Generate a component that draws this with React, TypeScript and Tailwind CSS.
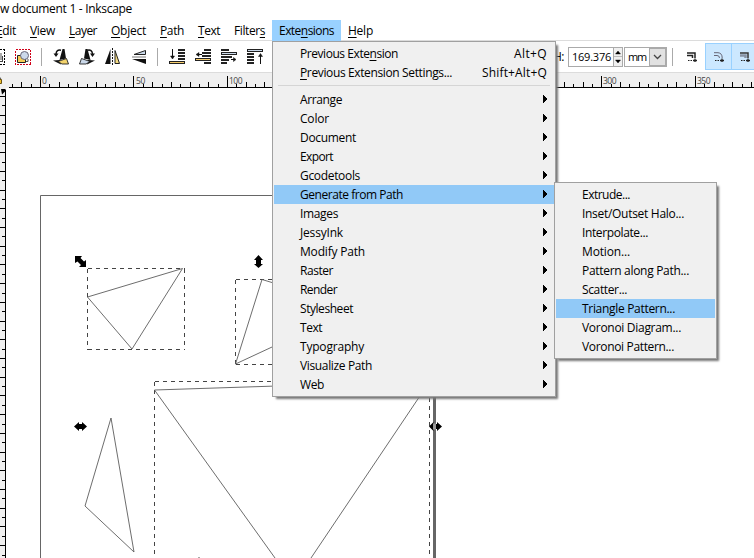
import React from "react";

type Mark = [string, string, string];

const menus: { t: Mark; x: string }[] = [
  { t: ["", "E", "dit"], x: "w-[34px]" },
  { t: ["", "V", "iew"], x: "w-[39px]" },
  { t: ["", "L", "ayer"], x: "w-[42px]" },
  { t: ["", "O", "bject"], x: "w-[49px]" },
  { t: ["", "P", "ath"], x: "w-[38px]" },
  { t: ["", "T", "ext"], x: "w-[36px]" },
  { t: ["Filter", "s", ""], x: "w-[38px]" },
];

const extensions: [string, number][] = [
  ["Arrange", 42], ["Color", 29], ["Document", 56], ["Export", 33], ["Gcodetools", 60],
  ["Generate from Path", 103], ["Images", 38], ["JessyInk", 43], ["Modify Path", 65],
  ["Raster", 33], ["Render", 37], ["Stylesheet", 53], ["Text", 22], ["Typography", 64],
  ["Visualize Path", 72], ["Web", 24],
];

const generators: [string, number][] = [
  ["Extrude...", 48], ["Inset/Outset Halo...", 102], ["Interpolate...", 66], ["Motion...", 48],
  ["Pattern along Path...", 107], ["Scatter...", 45], ["Triangle Pattern...", 93],
  ["Voronoi Diagram...", 99], ["Voronoi Pattern...", 92],
];

function Label({ w, children }: { w?: number; children: React.ReactNode }) {
  const ref = React.useRef<HTMLSpanElement>(null);
  const [space, setSpace] = React.useState(0);
  React.useLayoutEffect(() => {
    const el = ref.current;
    if (!el || !w) return;
    const n = (el.textContent || "").length;
    setSpace((w - el.getBoundingClientRect().width) / n);
  }, [w]);
  return (
    <span ref={ref} className="inline-block whitespace-pre" style={{ letterSpacing: `${space}px` }}>
      {children}
    </span>
  );
}

function Marked({ t, w }: { t: Mark; w?: number }) {
  return (
    <Label w={w}>
      {t[0]}
      <span className="underline decoration-1 underline-offset-2">{t[1]}</span>
      {t[2]}
    </Label>
  );
}

const menuWidths = [20, 25, 28, 35, 24, 22, 31];

function Arrow() {
  return (
    <svg width="5" height="8" viewBox="0 0 5 8" className="shrink-0" shapeRendering="crispEdges">
      <path d="M0 0L4.500 4L0 8Z" fill="#000" />
    </svg>
  );
}

function Rotate() {
  return (
    <>
      <path d="M62.500 49H64.500L66 58.500L59.500 60Z" fill="#111" />
      <path d="M53 60.500L60 60L61 64.500Z" fill="#111" />
      <path d="M58 61.500L66.500 58.500L68.500 64H62Z" fill="#f3d36c" stroke="#222" strokeWidth=".9" />
      <path d="M61 50.200Q56.500 49 56 54" fill="none" stroke="#111" strokeWidth="1.500" />
      <path d="M53.500 53.500H58.500L56 57Z" fill="#111" />
    </>
  );
}

function ToolbarIcons() {
  return (
    <svg width="272" height="31" viewBox="0 41 272 31" className="shrink-0">
      <g shapeRendering="crispEdges">
        <path d="M0 49.500H4M4.500 49V65M0 64.500H4" stroke="#000" strokeDasharray="2 1" fill="none" />
        <path d="M0 53h2l1 7H0z" fill="#aaa" />
        <path d="M0 61.500H3M2.500 56V62" stroke="#444" />
        <rect x="15.500" y="49.500" width="15" height="15" fill="none" stroke="#d00018" strokeDasharray="2 1" />
        <path d="M41.500 48V66M157.500 48V66" stroke="#aaa" />
      </g>
      <path d="M17.500 55.500H25.500V62.500H17.500Z" fill="#f7cd55" stroke="#222" />
      <circle cx="24.500" cy="55.500" r="4" fill="#cbd9ea" stroke="#667" />
      <path d="M28 59V61.500H26" stroke="#555" fill="none" />
      <Rotate />
      <path d="M85.500 49H83.500L82 58.500L88.500 60Z" transform="translate(2 0)" fill="#111" />
      <path d="M95 60.500L88 60L87 64.500Z" fill="#111" />
      <path d="M90 61.500L81.500 58.500L79.500 64H86Z" fill="#cbd9ea" stroke="#222" strokeWidth=".9" />
      <path d="M87.500 50.200Q92 49 92.500 54" fill="none" stroke="#111" strokeWidth="1.500" />
      <path d="M90 53.500H95L92.500 57Z" fill="#111" />
      <path d="M110.500 49V64H105Z" fill="#111" />
      <path d="M115 50.500V63.500H119.500Z" fill="#f6dc83" stroke="#222" />
      <path d="M112.500 48V65" stroke="#111" strokeDasharray="2 1" />
      <path d="M145.500 50.500V54.500H134Z" fill="#cbd9ea" stroke="#222" />
      <path d="M146 59V64L132 59Z" fill="#111" />
      <path d="M132 57H146" stroke="#777" />
      <g shapeRendering="crispEdges" stroke="#222" strokeWidth="2">
        <path d="M178 50H185M178 53H185M178 56H185M178 59H185" />
        <path d="M204 50H211M202 53H211M202 56H211M204 63H211" />
        <path d="M221 50H229M221 57H232M221 60H229M221 63H227" />
        <path d="M247 54H254M247 57H254M247 60H254M247 63H254" />
      </g>
      <g shapeRendering="crispEdges" fill="#f7cd6b" stroke="#222">
        <rect x="169.500" y="61.500" width="15" height="2" />
        <rect x="195.500" y="58.500" width="15" height="2" />
        <rect x="221.500" y="52.500" width="15" height="2" fill="#cbd9ea" />
        <rect x="247.500" y="49.500" width="15" height="2" fill="#cbd9ea" />
      </g>
      <g stroke="#111" fill="#111">
        <path d="M172.500 49V56M198 54.500H202M231 59.500H234M260.500 56V64" fill="none" />
        <path d="M170.500 56H174.500L172.500 59ZM199 52.500V56.500L196 54.500ZM233.500 57.500V61.500L236 59.500ZM258.500 56.500H262.500L260.500 53.500Z" strokeWidth=".5" />
      </g>
    </svg>
  );
}

function ScaleIcon({ kind }: { kind: number }) {
  return (
    <svg width="10" height="10" viewBox="0 0 10 10">
      {kind === 0 && <path d="M0 1H8V6M0 3.500H5.500V6" fill="none" stroke="#222" strokeWidth="1.500" />}
      {kind === 1 && <path d="M0 .700H4Q8.200 1 8.200 6M0 3.500H3Q5.500 3.500 5.500 6" fill="none" stroke="#667" strokeWidth="1" />}
      {kind === 2 && (
        <>
          <path d="M0 3.500H5.500V6" fill="none" stroke="#8793a5" strokeWidth="2.500" />
          <path d="M0 1H8V6" fill="none" stroke="#333" strokeWidth="1.500" />
        </>
      )}
      <path d="M1 8.500H6" stroke="#222" strokeDasharray="1.500 1" />
      <path d="M6 8.500H10M8 6.500V10" stroke="#222" strokeWidth="1.300" />
    </svg>
  );
}

function TopRuler() {
  const ticks: React.ReactNode[] = [];
  for (let i = -3; i < 77; i++) {
    const x = Math.floor(40.4 + i * 9.358) + 0.5;
    const top = i % 10 === 0 ? 76 : i % 2 === 0 ? 82 : 84;
    ticks.push(<path key={i} d={`M${x} ${top}V87`} stroke="#000" />);
  }
  return (
    <svg width="754" height="16" viewBox="0 72 754 16" className="block shrink-0 bg-[#f0f0f0]">
      <path d="M0 72.500H754" stroke="#dcdcdc" />
      <path d="M9 87.500H754" stroke="#000" />
      <g>{ticks}</g>
      <path d="M-1 79V77.500Q.500 77 .800 79" fill="none" stroke="#555" />
      <path d="M-2.500 79.500H1.500V83.500H-2.500" fill="#f0c02c" stroke="#6b5210" />
      <g fontFamily="Open Sans, sans-serif" fontSize="8.500" fill="#444" letterSpacing="-.3">
        <text x="42" y="84">0</text>
        <text x="136" y="84">50</text>
        <text x="229" y="84" letterSpacing="-.5">100</text>
        <text x="603" y="84" letterSpacing="-.5">300</text>
        <text x="697" y="84" letterSpacing="-.5">350</text>
      </g>
    </svg>
  );
}

function Canvas() {
  const ticks: React.ReactNode[] = [];
  for (let i = 0; i < 50; i++) {
    const y = Math.floor(96.5 + i * 9.358) + 0.5;
    ticks.push(<path key={i} d={`M${i % 2 ? 2 : 0} ${y}H5`} stroke="#000" />);
  }
  return (
    <svg width="754" height="470" viewBox="0 88 754 470" className="block bg-white">
      <rect x="0" y="88" width="6" height="470" fill="#f0f0f0" />
      <path d="M5.500 90V558" stroke="#000" />
      {ticks}
      <path d="M1 89H5.500V91L2 94.500Z" fill="#000" />
      <path d="M40.500 558V195.500H434" fill="none" stroke="#666" />
      <path d="M434.500 196V558" stroke="#666" strokeWidth="3" />
      <g fill="none" stroke="#444" strokeDasharray="4 4" shapeRendering="crispEdges">
        <path d="M87.500 268.500H184.500M87.500 268.500V349.500M87.500 349.500H184.500M184.500 268.500V349.500" />
        <path d="M235.500 279.500H300M235.500 279.500V364.500M235.500 364.500H300" />
        <path d="M154.500 381.500H429.500M154.500 381.500V558M429.500 381.500V558" />
      </g>
      <g fill="none" stroke="#5c5c5c" strokeWidth=".9">
        <path d="M87.500 297L182.500 268.500L132 349L87.500 297" />
        <path d="M300 291L262 279.500L235.500 364L300 334" />
        <path d="M275 558L154.500 390L430 381L311 558" />
        <path d="M111 418L85 506L134 552L111 418" />
      </g>
      <path d="M198 557.500h2" stroke="#aaa" />
      <path d="M75 256H82L80.500 258L84 261.500L86 260V267H79L81 265L77.500 261.500L75 263Z" fill="#000" />
      <path d="M258.500 255L263 260H261V264H263L258.500 268L254 264H256V260H254Z" fill="#000" />
      <path d="M74 426.500L79 422V424H82V422L87 426.500L82 431V429H79V431Z" fill="#000" />
      <path d="M429 426.500L433.500 422V424H437V422L442 426.500L437 431V429H433.500V431Z" fill="#000" />
      <path d="M433 423.500h3v6h-3z" fill="#999" />
    </svg>
  );
}

export default function App() {
  return (
    <div className="relative flex h-[558px] w-[754px] flex-col overflow-hidden bg-white font-['Open_Sans',sans-serif] text-[12px] leading-[19px] text-black">
      <div className="h-5 shrink-0 leading-[18px]">
        <Label w={132}>w document 1 - Inkscape</Label>
      </div>
      <nav className="flex h-[21px] shrink-0 border-b border-[#dcdcdc] leading-[21px]">
        <div className="-ml-1 flex shrink-0">
          {menus.map((m, i) => (
            <div key={i} className={`${m.x} shrink-0`}>
              <Marked t={m.t} w={menuWidths[i]} />
            </div>
          ))}
        </div>
        <div className="h-[21px] w-[69px] shrink-0 bg-[#99d1ff] pl-[7px]">
          <Marked t={["Exte", "n", "sions"]} w={55} />
        </div>
        <div className="pl-[7px]"><Marked t={["", "H", "elp"]} w={25} /></div>
      </nav>
      <div className="flex h-[31px] shrink-0 items-center">
        <ToolbarIcons />
        <div className="ml-[281px] flex h-full items-center">
          <span className="w-[15px]"><Label w={11}>H:</Label></span>
          <div className="flex h-5 w-[45px] items-center border border-r-0 border-[#aaa] pl-[3px] text-[11px]">
            <Label w={39}>169.376</Label>
          </div>
          <div className="flex h-5 w-[10px] flex-col border border-[#aaa] bg-[#f0f0f0]">
            <svg width="8" height="18" viewBox="0 0 8 18"><path d="M0 8.500H8" stroke="#bbb" /><path d="M1.500 6L4 3L6.500 6ZM1.500 12L4 15L6.500 12Z" stroke="#000" strokeWidth=".4" /></svg>
          </div>
          <div className="ml-px flex h-5 w-[43px] border border-[#aaa]">
            <div className="w-6 shrink-0 pl-[3px] text-[11px] leading-[18px]"><Label w={18}>mm</Label></div>
            <div className="flex flex-1 items-center justify-center border border-[#aaa] bg-[#e1e1e1]">
              <svg width="9" height="6" viewBox="0 0 9 6"><path d="M1 1L4.500 4.500L8 1" fill="none" stroke="#444" strokeWidth="1.300" /></svg>
            </div>
          </div>
          <div className="ml-[5px] h-[18px] w-px bg-[#aaa]" />
          <div className="ml-[14px] w-[18px] shrink-0"><ScaleIcon kind={0} /></div>
          <div className="flex h-[27px] w-[27px] shrink-0 items-center justify-center border border-[#99d1ff] bg-[#cce8ff]"><ScaleIcon kind={1} /></div>
          <div className="-ml-px flex h-[27px] w-[27px] shrink-0 items-center justify-center border border-[#99d1ff] bg-[#cce8ff]"><ScaleIcon kind={2} /></div>
        </div>
      </div>
      <TopRuler />
      <Canvas />

      <div className="absolute top-[41px] left-[272px] flex h-[356px] w-[284px] flex-col border border-[#a0a0a0] bg-[#f0f0f0] px-px pt-[3px] shadow-[3px_3px_2px_-1px_#777]">
        <div className="flex h-[19px] justify-between pr-[7px] pl-[26px] leading-[18px]">
          <Marked t={["Previous Exte", "n", "sion"]} w={98} />
          <Label w={33}>Alt+Q</Label>
        </div>
        <div className="flex h-[19px] justify-between pr-[7px] pl-[26px] leading-[18px]">
          <Marked t={["", "P", "revious Extension Settings..."]} w={152} />
          <Label w={65}>Shift+Alt+Q</Label>
        </div>
        <div className="mx-1 mt-[2px] mb-[4px] h-px shrink-0 bg-[#d5d5d5]" />
        {extensions.map(([name, w]) => (
          <div key={name} className={`flex h-[19px] items-center justify-between pr-[6px] pl-[26px] ${name === "Generate from Path" ? "bg-[#91c9f7]" : ""}`}>
            <Label w={w}>{name}</Label>
            <span className="-mt-[2px]"><Arrow /></span>
          </div>
        ))}
      </div>

      <div className="absolute top-[182px] left-[554px] flex h-[177px] w-[163px] flex-col border border-[#a0a0a0] bg-[#f0f0f0] px-px pt-[2px] shadow-[3px_3px_2px_-1px_#777]">
        {generators.map(([name, w]) => (
          <div key={name} className={`h-[19px] pl-[26px] ${name === "Triangle Pattern..." ? "bg-[#91c9f7]" : ""}`}>
            <Label w={w}>{name}</Label>
          </div>
        ))}
      </div>
    </div>
  );
}
